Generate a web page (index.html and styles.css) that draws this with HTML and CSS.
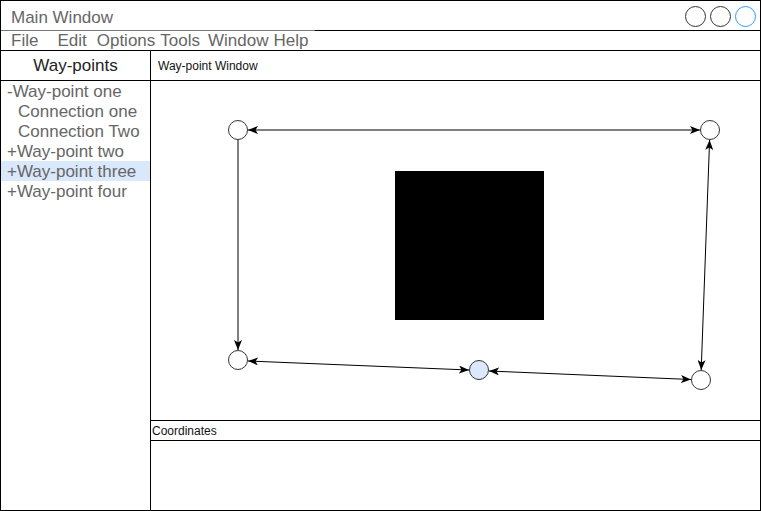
FILE: index.html
```html
<!DOCTYPE html>
<html>
<head>
<meta charset="utf-8">
<link rel="stylesheet" href="styles.css">
</head>
<body>
<div class="window">
  <div class="titlebar">
    <span class="title">Main Window</span>
    <div class="controls">
      <span class="ctl"></span>
      <span class="ctl"></span>
      <span class="ctl ctl-blue"></span>
    </div>
  </div>
  <div class="menubar">
    <div class="menu">
      <span class="mi">File</span>
      <span class="mi mi-edit">Edit</span>
      <span class="mi mi-options">Options</span>
      <span class="mi mi-tools">Tools</span>
      <span class="mi mi-window">Window</span>
      <span class="mi mi-help">Help</span>
    </div>
    <div class="menu-fill"></div>
  </div>
  <div class="main">
    <div class="sidebar">
      <div class="side-head">Way-points</div>
      <ul class="tree">
        <li class="node">-Way-point one</li>
        <li class="node child">Connection one</li>
        <li class="node child">Connection Two</li>
        <li class="node">+Way-point two</li>
        <li class="node selected">+Way-point three</li>
        <li class="node">+Way-point four</li>
      </ul>
    </div>
    <div class="content">
      <div class="pane-head">Way-point Window</div>
      <div class="canvas">
        <svg class="diagram" width="609" height="339" viewBox="151 81 609 339">
          <defs>
            <marker id="arr" markerUnits="userSpaceOnUse" markerWidth="11" markerHeight="8" refX="10" refY="4" orient="auto-start-reverse">
              <path d="M0,0 L10,4 L0,8 L2.5,4 Z" fill="#000"/>
            </marker>
          </defs>
          <g stroke="#000" stroke-width="1" fill="none">
            <line x1="248" y1="130" x2="700" y2="130" marker-start="url(#arr)" marker-end="url(#arr)"/>
            <line x1="238" y1="140" x2="238" y2="350" marker-end="url(#arr)"/>
            <line x1="248" y1="361" x2="469" y2="370" marker-start="url(#arr)" marker-end="url(#arr)"/>
            <line x1="489" y1="371" x2="691" y2="379.5" marker-start="url(#arr)" marker-end="url(#arr)"/>
            <line x1="701.2" y1="370" x2="709.6" y2="140" marker-start="url(#arr)" marker-end="url(#arr)"/>
          </g>
          <rect x="395" y="171" width="149" height="149" fill="#000"/>
          <g stroke="#333" stroke-width="1">
            <circle cx="238" cy="130" r="9.5" fill="#fff"/>
            <circle cx="710" cy="130" r="9.5" fill="#fff"/>
            <circle cx="238" cy="360" r="9.5" fill="#fff"/>
            <circle cx="479" cy="370" r="9.5" fill="#dae8fc"/>
            <circle cx="701" cy="380" r="9.5" fill="#fff"/>
          </g>
        </svg>
      </div>
      <div class="pane-head small">Coordinates</div>
      <div class="coords"></div>
    </div>
  </div>
</div>
</body>
</html>
```
FILE: styles.css
```css
* { box-sizing: border-box; }
html, body {
  margin: 0;
  padding: 0;
  background: #fff;
}
body {
  font-family: "Liberation Sans", Arial, Helvetica, sans-serif;
}
.window {
  width: 761px;
  height: 511px;
  border: 1px solid #000;
  display: flex;
  flex-direction: column;
  overflow: hidden;
}
.titlebar {
  height: 29px;
  flex: 0 0 29px;
  display: flex;
  align-items: center;
  justify-content: space-between;
  padding-left: 10px;
  padding-right: 4px;
}
.title {
  font-size: 17px;
  color: #666;
  line-height: 20px;
  margin-top: 4px;
}
.controls {
  display: flex;
  gap: 4px;
  margin-top: 1px;
}
.ctl {
  width: 21px;
  height: 21px;
  border: 1px solid #333;
  border-radius: 50%;
  display: block;
}
.ctl-blue { border-color: #3399ff; }
.menubar {
  height: 21px;
  flex: 0 0 21px;
  display: flex;
  border-bottom: 1px solid #000;
}
.menu {
  width: 315px;
  margin-left: -1px;
  border-top: 1px solid #777;
  border-left: 1px solid #777;
  display: flex;
  align-items: center;
  padding-left: 10px;
  font-size: 17px;
  color: #666;
  line-height: 19px;
}
.menu-fill {
  flex: 1;
  border-top: 1px solid #000;
}
.mi { white-space: nowrap; }
.mi-edit { margin-left: 19px; }
.mi-options { margin-left: 10px; }
.mi-tools { margin-left: 5px; }
.mi-window { margin-left: 8px; }
.mi-help { margin-left: 5px; }
.main {
  flex: 1;
  display: flex;
  min-height: 0;
}
.sidebar {
  width: 150px;
  flex: 0 0 150px;
  border-right: 1px solid #000;
  display: flex;
  flex-direction: column;
}
.side-head {
  height: 30px;
  flex: 0 0 30px;
  border-bottom: 1px solid #000;
  text-align: center;
  font-size: 17px;
  color: #222;
  line-height: 30px;
}
.tree {
  list-style: none;
  margin: 0;
  padding: 0;
}
.node {
  height: 20px;
  line-height: 20px;
  font-size: 17px;
  color: #666;
  padding-left: 6px;
  padding-top: 1px;
  white-space: nowrap;
}
.node.child { padding-left: 17px; }
.node.selected { background: #dae8fc; }
.content {
  flex: 1;
  display: flex;
  flex-direction: column;
  min-width: 0;
}
.pane-head {
  height: 30px;
  flex: 0 0 30px;
  border-bottom: 1px solid #000;
  font-size: 12px;
  color: #111;
  line-height: 30px;
  padding-left: 7px;
}
.pane-head.small {
  height: 20px;
  flex: 0 0 20px;
  line-height: 20px;
  padding-left: 1px;
}
.canvas {
  height: 340px;
  flex: 0 0 340px;
  border-bottom: 1px solid #000;
}
.diagram { display: block; }
.coords { flex: 1; }
```
